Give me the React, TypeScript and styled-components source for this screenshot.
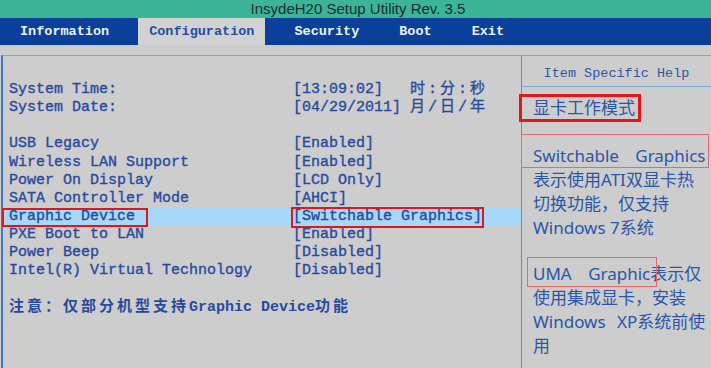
import React from "react";
import styled, { createGlobalStyle } from "styled-components";

const GlobalStyle = createGlobalStyle`
  html, body {
    margin: 0;
    padding: 0;
    background: #cdcdcd;
    overflow: hidden;
  }
`;

const Screen = styled.div`
  width: 711px;
  height: 368px;
  display: flex;
  flex-direction: column;
  background: #cdcdcd;
  overflow: hidden;
`;

const TitleBar = styled.div`
  height: 18px;
  background: #3ab596;
  color: #1b2a33;
  font-family: "Liberation Sans", Arial, sans-serif;
  font-size: 15px;
  line-height: 18px;
  text-align: center;
  padding-left: 5px;
`;

const TabBar = styled.div`
  height: 27px;
  background: #0a3f9a;
  display: flex;
  align-items: stretch;
  gap: 18px;
  padding-left: 9px;
`;

const Tab = styled.div<{ $active?: boolean }>`
  padding: 0 11px;
  line-height: 27px;
  font-family: "Liberation Mono", monospace;
  font-weight: bold;
  font-size: 13.5px;
  color: ${(p) => (p.$active ? "#2a4b9f" : "#eef2fa")};
  background: ${(p) => (p.$active ? "#d2d2d2" : "transparent")};
`;

const Body = styled.div`
  flex: 1;
  padding-top: 10px;
  display: flex;
`;

const Frame = styled.div`
  flex: 1;
  margin-left: 1px;
  border-left: 2px solid #3f7dcc;
  border-top: 1px solid #76a4da;
  display: grid;
  grid-template-columns: 518px 1fr;
`;

const LeftPane = styled.div`
  padding-top: 25px;
  font-family: "Liberation Mono", "Noto Sans CJK SC", monospace;
  font-size: 15px;
  color: #284a9e;
  -webkit-text-stroke: 0.35px #284a9e;
`;

const Row = styled.div<{ $selected?: boolean }>`
  display: grid;
  grid-template-columns: 284px 1fr;
  height: 18.15px;
  line-height: 18px;
  padding-left: 6px;
  white-space: pre;
  background: ${(p) => (p.$selected ? "#a7d8f7" : "transparent")};
`;

const Spacer = styled.div`
  height: 18.15px;
`;

const Cjk = styled.span`
  letter-spacing: 3px;
`;

const Note = styled.div`
  height: 18px;
  line-height: 18px;
  padding-left: 6px;
  font-weight: bold;
  font-size: 15px;
  white-space: pre;
  -webkit-text-stroke: 0;
`;

const Mark = styled.span<{
  $t: number;
  $r: number;
  $b: number;
  $l: number;
  $thick?: boolean;
}>`
  position: relative;
  display: inline-block;
  &::after {
    content: "";
    position: absolute;
    top: ${(p) => p.$t}px;
    right: ${(p) => p.$r}px;
    bottom: ${(p) => p.$b}px;
    left: ${(p) => p.$l}px;
    border: ${(p) => (p.$thick ? "3px solid #e3161c" : "1.5px solid #e66a6c")};
    pointer-events: none;
  }
`;

const RedBox = styled(Mark)`
  &::after {
    border: 2.5px solid #e3161c;
  }
`;

const RightPane = styled.div`
  border-left: 1.5px solid #5b8fd0;
  display: flex;
  flex-direction: column;
`;

const HelpHeader = styled.div`
  height: 24px;
  padding-top: 6px;
  line-height: 24px;
  text-align: center;
  border-bottom: 1px solid #7ca6d8;
  font-family: "Liberation Mono", monospace;
  font-size: 13.5px;
  color: #34559f;
`;

const HelpBody = styled.div`
  padding: 9px 0 0 11px;
  font-family: "Noto Sans", "Noto Sans CJK SC", sans-serif;
  font-size: 17px;
  color: #2b55a7;
`;

const HelpLine = styled.div<{ $gap?: number; $spacing?: number }>`
  height: 24px;
  line-height: 24px;
  white-space: nowrap;
  margin-top: ${(p) => p.$gap ?? 0}px;
  word-spacing: ${(p) => p.$spacing ?? 0}px;
`;

const Words = styled.span<{ $spacing: number }>`
  word-spacing: ${(p) => p.$spacing}px;
`;

const items: { label: string; value: string; selected?: boolean }[] = [
  { label: "USB Legacy", value: "[Enabled]" },
  { label: "Wireless LAN Support", value: "[Enabled]" },
  { label: "Power On Display", value: "[LCD Only]" },
  { label: "SATA Controller Mode", value: "[AHCI]" },
  { label: "Graphic Device", value: "[Switchable Graphics]", selected: true },
  { label: "PXE Boot to LAN", value: "[Enabled]" },
  { label: "Power Beep", value: "[Disabled]" },
  { label: "Intel(R) Virtual Technology", value: "[Disabled]" },
];

const tabs = ["Information", "Configuration", "Security", "Boot", "Exit"];

const App = () => {
  return (
    <Screen>
      <GlobalStyle />
      <TitleBar>InsydeH20 Setup Utility Rev. 3.5</TitleBar>
      <TabBar>
        {tabs.map((t) => (
          <Tab key={t} $active={t === "Configuration"}>
            {t}
          </Tab>
        ))}
      </TabBar>
      <Body>
        <Frame>
          <LeftPane>
            <Row>
              <span>System Time:</span>
              <span>
                {"[13:09:02]   "}
                <Cjk>时:分:秒</Cjk>
              </span>
            </Row>
            <Row>
              <span>System Date:</span>
              <span>
                {"[04/29/2011] "}
                <Cjk>月/日/年</Cjk>
              </span>
            </Row>
            <Spacer />
            {items.map((it) =>
              it.selected ? (
                <Row key={it.label} $selected>
                  <span>
                    <RedBox $t={0} $r={-13} $b={-1} $l={-7}>
                      {it.label}
                    </RedBox>
                  </span>
                  <span>
                    <RedBox $t={-1} $r={-2} $b={-2} $l={-2}>
                      {it.value}
                    </RedBox>
                  </span>
                </Row>
              ) : (
                <Row key={it.label}>
                  <span>{it.label}</span>
                  <span>{it.value}</span>
                </Row>
              )
            )}
            <Spacer />
            <Note>
              <Cjk>注意：仅部分机型支持</Cjk>Graphic Device<Cjk>功能</Cjk>
            </Note>
          </LeftPane>
          <RightPane>
            <HelpHeader>Item Specific Help</HelpHeader>
            <HelpBody>
              <HelpLine>
                <Mark $thick $t={-2} $r={-6} $b={-2} $l={-14}>
                  显卡工作模式
                </Mark>
              </HelpLine>
              <HelpLine $gap={24} $spacing={12}>
                <Mark $t={-10} $r={-3} $b={0} $l={-12}>
                  Switchable Graphics
                </Mark>
              </HelpLine>
              <HelpLine>表示使用ATI双显卡热</HelpLine>
              <HelpLine>切换功能，仅支持</HelpLine>
              <HelpLine>Windows 7系统</HelpLine>
              <HelpLine $gap={22}>
                <Mark $t={-5} $r={-7} $b={-1} $l={-6}>
                  <Words $spacing={12}>UMA Graphic</Words>
                </Mark>
                表示仅
              </HelpLine>
              <HelpLine>使用集成显卡，安装</HelpLine>
              <HelpLine $spacing={7}>Windows XP系统前使</HelpLine>
              <HelpLine>用</HelpLine>
            </HelpBody>
          </RightPane>
        </Frame>
      </Body>
    </Screen>
  );
};

export default App;
